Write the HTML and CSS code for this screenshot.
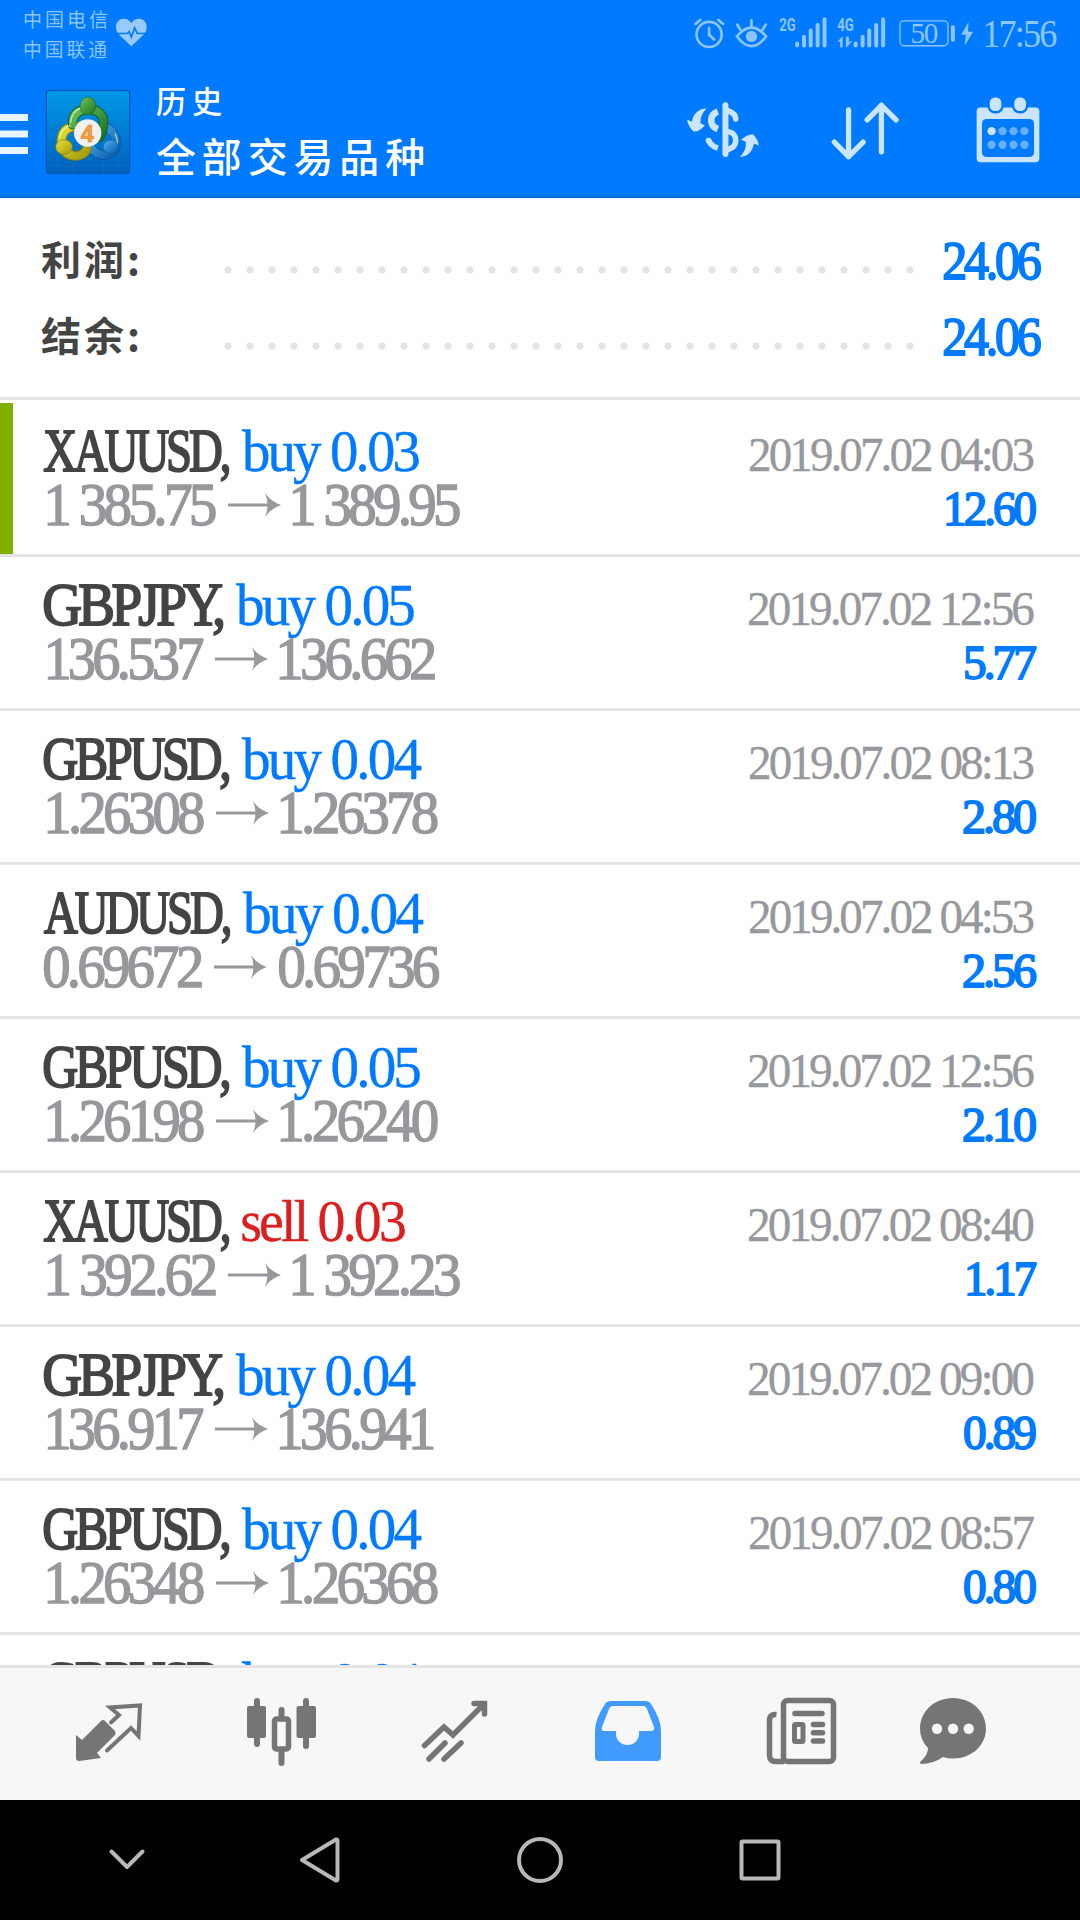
FILE: index.html
```html
<!DOCTYPE html>
<html lang="zh-CN">
<head>
<meta charset="utf-8">
<title>历史</title>
<link rel="stylesheet" href="styles.css">
</head>
<body>
<header class="header">
  <div class="status">
    <div class="carriers">
      <span class="carrier" data-w="83">中国电信</span>
      <span class="carrier" data-w="83">中国联通</span>
    </div>
    <svg class="heart" viewBox="340 50 105 100" width="35" height="33">
      <path d="M392 142 L352 104 C338 82 348 58 368 58 C380 58 388 64 392 72 C396 64 404 58 416 58 C436 58 446 82 432 104 Z" fill="#99caff"/>
      <path d="M345 103 H380 L385 97 L392 114 L402 86 L410 103 H440" fill="none" stroke="#007aff" stroke-width="5"/>
    </svg>
    <svg class="status-icons" viewBox="90 30 865 130" width="288" height="43">
      <g fill="none" stroke="#8cc5ff" stroke-width="8" stroke-linecap="round">
        <circle cx="145" cy="104" r="38"/>
        <path d="M145 85 V105 L160 119 M104 72 L118 60 M187 72 L173 60"/>
        <path d="M229 110 Q273 57 317 110 Q273 168 229 110 Z M273 61 V78 M230 74 L239 89 M316 74 L307 89"/>
      </g>
      <circle cx="273" cy="110" r="17" fill="#8cc5ff"/>
      <g stroke="#8cc5ff" stroke-width="12" stroke-linecap="round">
        <path d="M411 131 V137 M432 111 V137 M452 92 V137 M473 75 V137 M494 58 V137"/>
        <path d="M588 131 V137 M609 111 V137 M629 92 V137 M650 75 V137 M671 58 V137"/>
      </g>
      <path d="M543 142 V122 L535 126 L547 112 V142 Z M560 112 V142 L575 125 L566 129 V112 Z" fill="#8cc5ff" stroke="#8cc5ff" stroke-width="3"/>
      <g class="net" fill="#8cc5ff">
        <text x="357" y="93" textLength="50" lengthAdjust="spacingAndGlyphs">2G</text>
        <text x="532" y="93" textLength="50" lengthAdjust="spacingAndGlyphs">4G</text>
      </g>
      <rect x="722" y="63" width="145" height="75" rx="12" fill="none" stroke="#8cc5ff" stroke-width="4"/>
      <rect x="876" y="76" width="12" height="50" rx="5" fill="#8cc5ff"/>
      <text class="charge" x="754" y="130" textLength="80" lengthAdjust="spacingAndGlyphs" fill="#8cc5ff">50</text>
      <path d="M929 66 L907 105 H921 L918 137 L943 96 H928 Z" fill="#8cc5ff"/>
    </svg>
    <span class="clock" data-w="72">17:56</span>
  </div>
  <div class="toolbar">
    <svg class="menu" viewBox="0 0 28 41" width="28" height="41">
      <path d="M0 3.5H28M0 20H28M0 36.5H28" stroke="#e8f4ff" stroke-width="7"/>
    </svg>
    <svg class="logo" viewBox="0 0 288 288" width="96" height="96">
      <defs>
        <linearGradient id="bg" x1="0" y1="0" x2="0" y2="1"><stop offset="0" stop-color="#0098ea"/><stop offset="1" stop-color="#0060ba"/></linearGradient>
        <linearGradient id="gr" x1="0" y1="0" x2="1" y2="1"><stop offset="0" stop-color="#72c45c"/><stop offset="1" stop-color="#157224"/></linearGradient>
        <linearGradient id="ye" x1="0" y1="0" x2="1" y2="1"><stop offset="0" stop-color="#e8e03a"/><stop offset="1" stop-color="#a39b0c"/></linearGradient>
        <linearGradient id="bl" x1="0" y1="0" x2="1" y2="1"><stop offset="0" stop-color="#4db4ea"/><stop offset="1" stop-color="#0a5cae"/></linearGradient>
      </defs>
      <rect x="19" y="19" width="250" height="250" rx="10" fill="url(#bg)" stroke="#0058b8" stroke-width="4"/>
      <path d="M52 20V268M98 20V268M144 20V268M190 20V268M236 20V268M20 62H268M20 108H268M20 154H268M20 200H268M20 246H268" stroke="#2f9de8" stroke-opacity=".25" stroke-width="2"/>
      <g fill="none" stroke-linecap="round">
        <path d="M154 192 Q172 216 198 213 Q232 207 228 172 Q224 136 192 130" stroke="#0a5ca8" stroke-width="29"/>
        <path d="M154 192 Q172 216 198 213 Q232 207 228 172 Q224 136 192 130" stroke="url(#bl)" stroke-width="23"/>
        <path d="M110 126 Q66 130 64 170 Q66 214 108 216 Q132 214 140 196" stroke="#87820a" stroke-width="29"/>
        <path d="M110 126 Q66 130 64 170 Q66 214 108 216 Q132 214 140 196" stroke="url(#ye)" stroke-width="23"/>
        <path d="M98 122 Q96 80 144 74 Q196 80 190 126 Q188 144 178 160" stroke="#0e6420" stroke-width="29"/>
        <path d="M98 122 Q96 80 144 74 Q196 80 190 126 Q188 144 178 160" stroke="url(#gr)" stroke-width="23"/>
        <path d="M92 116 Q95 80 124 72 M59 160 Q65 132 90 125 M226 196 Q238 178 226 150" stroke="#e7f6c9" stroke-opacity=".75" stroke-width="4"/>
      </g>
      <ellipse cx="144" cy="66" rx="24" ry="27" fill="url(#gr)" stroke="#176b27" stroke-width="2"/>
      <ellipse cx="72" cy="189" rx="25" ry="22" fill="url(#ye)" stroke="#87820a" stroke-width="2"/>
      <ellipse cx="212" cy="188" rx="23" ry="20" fill="url(#bl)" stroke="#0a5ca8" stroke-width="2"/>
      <circle cx="143" cy="147" r="41" fill="#f0f0f2"/>
      <text class="four" x="122" y="173" fill="#f2a040" stroke="#e8862c" stroke-width="2" textLength="40" lengthAdjust="spacingAndGlyphs">4</text>
    </svg>
    <div class="titles">
      <h1 class="title" data-w="66">历史</h1>
      <div class="subtitle" data-w="267">全部交易品种</div>
    </div>
    <svg class="actions" viewBox="60 280 1100 220" width="367" height="73">
      <g fill="none" stroke="#cce5ff" stroke-linecap="round" stroke-linejoin="round">
        <path d="M194 317 V464" stroke-width="18"/>
        <path d="M203 334 Q224 342 225 358" stroke-width="17"/>
        <path d="M143 423 Q151 440 171 446" stroke-width="17" stroke-linecap="butt"/>
        <path d="M203 397 Q224 400 225 423 Q225 442 203 450" stroke-width="17"/>
        <path d="M171 336 Q151 343 151 362 Q151 381 171 389" stroke-width="20" stroke-linecap="butt"/>
        <path d="M565 331V472M522 428L565 472L609 428M664 457V317M621 361L664 317L708 361" stroke-width="16"/>
      </g>
      <circle cx="143" cy="423" r="8.500" fill="#cce5ff"/>
      <path d="M137 327 C108 327 95 350 93 367 L78 360 Q82 382 98 396 Q114 398 132 378 L119 371 C118 352 126 338 137 327 Z" fill="#cce5ff"/>
      <path d="M237 473 C268 470 276 450 280 432 L294 439 Q293 420 277 404 Q258 405 241 421 L255 427 C257 447 250 460 237 473 Z" fill="#cce5ff"/>
      <rect x="951" y="324" width="189" height="165" rx="12" fill="#cce5ff"/>
      <rect x="967" y="358" width="157" height="115" rx="14" fill="#007aff"/>
      <rect x="987" y="290" width="42" height="48" rx="19" fill="#cce5ff" stroke="#007aff" stroke-width="7"/>
      <rect x="1061" y="290" width="42" height="48" rx="19" fill="#cce5ff" stroke="#007aff" stroke-width="7"/>
      <g fill="#66afff"><circle cx="1029" cy="395" r="12.500"/><circle cx="1062" cy="395" r="12.500"/><circle cx="1095" cy="395" r="12.500"/><circle cx="996" cy="436" r="12.500"/><circle cx="1029" cy="436" r="12.500"/><circle cx="1062" cy="436" r="12.500"/><circle cx="1095" cy="436" r="12.500"/></g>
      <circle cx="996" cy="395" r="12.500" fill="#cce5ff"/>
    </svg>
  </div>
</header>

<section class="summary">
  <div class="total"><span class="label" data-w="97">利润:</span><i class="dots"></i><b class="sum" data-w="97">24.06</b></div>
  <div class="total"><span class="label" data-w="97">结余:</span><i class="dots"></i><b class="sum" data-w="97">24.06</b></div>
</section>

<main class="deals">
  <article class="deal marked">
    <div class="left">
      <div class="line"><span class="symbol" data-w="185">XAUUSD,</span><span class="side buy" data-w="177">buy 0.03</span></div>
      <div class="line price"><span data-w="168">1 385.75</span><svg class="arrow" viewBox="0 0 53 24"><path d="M0 12H42" stroke="#97989c" stroke-width="3"/><path d="M37 0Q42 8 53 12Q42 16 37 24Q42 12 37 0Z" fill="#97989c"/></svg><span data-w="167">1 389.95</span></div>
    </div>
    <div class="right"><time data-w="284">2019.07.02 04:03</time><b class="profit" data-w="89">12.60</b></div>
  </article>
  <article class="deal">
    <div class="left">
      <div class="line"><span class="symbol" data-w="179">GBPJPY,</span><span class="side buy" data-w="178">buy 0.05</span></div>
      <div class="line price"><span data-w="155">136.537</span><svg class="arrow" viewBox="0 0 53 24"><path d="M0 12H42" stroke="#97989c" stroke-width="3"/><path d="M37 0Q42 8 53 12Q42 16 37 24Q42 12 37 0Z" fill="#97989c"/></svg><span data-w="155">136.662</span></div>
    </div>
    <div class="right"><time data-w="285">2019.07.02 12:56</time><b class="profit" data-w="71">5.77</b></div>
  </article>
  <article class="deal">
    <div class="left">
      <div class="line"><span class="symbol" data-w="185">GBPUSD,</span><span class="side buy" data-w="180">buy 0.04</span></div>
      <div class="line price"><span data-w="156">1.26308</span><svg class="arrow" viewBox="0 0 53 24"><path d="M0 12H42" stroke="#97989c" stroke-width="3"/><path d="M37 0Q42 8 53 12Q42 16 37 24Q42 12 37 0Z" fill="#97989c"/></svg><span data-w="157">1.26378</span></div>
    </div>
    <div class="right"><time data-w="284">2019.07.02 08:13</time><b class="profit" data-w="72">2.80</b></div>
  </article>
  <article class="deal">
    <div class="left">
      <div class="line"><span class="symbol" data-w="186">AUDUSD,</span><span class="side buy" data-w="181">buy 0.04</span></div>
      <div class="line price zero"><span data-w="158">0.69672</span><svg class="arrow" viewBox="0 0 53 24"><path d="M0 12H42" stroke="#97989c" stroke-width="3"/><path d="M37 0Q42 8 53 12Q42 16 37 24Q42 12 37 0Z" fill="#97989c"/></svg><span data-w="160">0.69736</span></div>
    </div>
    <div class="right"><time data-w="284">2019.07.02 04:53</time><b class="profit" data-w="72">2.56</b></div>
  </article>
  <article class="deal">
    <div class="left">
      <div class="line"><span class="symbol" data-w="185">GBPUSD,</span><span class="side buy" data-w="178">buy 0.05</span></div>
      <div class="line price"><span data-w="156">1.26198</span><svg class="arrow" viewBox="0 0 53 24"><path d="M0 12H42" stroke="#97989c" stroke-width="3"/><path d="M37 0Q42 8 53 12Q42 16 37 24Q42 12 37 0Z" fill="#97989c"/></svg><span data-w="157">1.26240</span></div>
    </div>
    <div class="right"><time data-w="285">2019.07.02 12:56</time><b class="profit" data-w="72">2.10</b></div>
  </article>
  <article class="deal">
    <div class="left">
      <div class="line"><span class="symbol" data-w="185">XAUUSD,</span><span class="side sell" data-w="163">sell 0.03</span></div>
      <div class="line price"><span data-w="168">1 392.62</span><svg class="arrow" viewBox="0 0 53 24"><path d="M0 12H42" stroke="#97989c" stroke-width="3"/><path d="M37 0Q42 8 53 12Q42 16 37 24Q42 12 37 0Z" fill="#97989c"/></svg><span data-w="167">1 392.23</span></div>
    </div>
    <div class="right"><time data-w="285">2019.07.02 08:40</time><b class="profit" data-w="68">1.17</b></div>
  </article>
  <article class="deal">
    <div class="left">
      <div class="line"><span class="symbol" data-w="179">GBPJPY,</span><span class="side buy" data-w="180">buy 0.04</span></div>
      <div class="line price"><span data-w="155">136.917</span><svg class="arrow" viewBox="0 0 53 24"><path d="M0 12H42" stroke="#97989c" stroke-width="3"/><path d="M37 0Q42 8 53 12Q42 16 37 24Q42 12 37 0Z" fill="#97989c"/></svg><span data-w="153">136.941</span></div>
    </div>
    <div class="right"><time data-w="285">2019.07.02 09:00</time><b class="profit" data-w="72">0.89</b></div>
  </article>
  <article class="deal">
    <div class="left">
      <div class="line"><span class="symbol" data-w="185">GBPUSD,</span><span class="side buy" data-w="180">buy 0.04</span></div>
      <div class="line price"><span data-w="156">1.26348</span><svg class="arrow" viewBox="0 0 53 24"><path d="M0 12H42" stroke="#97989c" stroke-width="3"/><path d="M37 0Q42 8 53 12Q42 16 37 24Q42 12 37 0Z" fill="#97989c"/></svg><span data-w="157">1.26368</span></div>
    </div>
    <div class="right"><time data-w="284">2019.07.02 08:57</time><b class="profit" data-w="72">0.80</b></div>
  </article>
  <article class="deal">
    <div class="left">
      <div class="line"><span class="symbol" data-w="185">GBPUSD,</span><span class="side buy" data-w="180">buy 0.04</span></div>
    </div>
  </article>
</main>

<nav class="tabs">
  <svg viewBox="0 1668 195 132" width="195" height="132">
    <path d="M101 1721 Q103 1719 105 1721 L115 1731 Q116 1733 115 1735 L97 1753 L101 1758 L79 1761 Q76 1761 76 1758 V1735 L82 1740 Z" fill="#757575"/>
    <path d="M111 1722.500 L119 1715 L110 1707.500 L140 1705.500 L138.500 1736 L131 1728 L107 1750.500" fill="none" stroke="#757575" stroke-width="4" stroke-linecap="round"/>
  </svg>
  <svg viewBox="195 1668 173 132" width="173" height="132">
    <path d="M257 1701V1744M281.500 1710V1720M281.500 1750V1763M306 1701V1746" stroke="#757575" stroke-width="6" stroke-linecap="round"/>
    <rect x="247" y="1706" width="19" height="32" rx="2" fill="#757575"/><rect x="296.500" y="1706" width="19.500" height="32" rx="2" fill="#757575"/>
    <rect x="274.500" y="1719" width="14" height="30" rx="2" fill="#f7f7f7" stroke="#757575" stroke-width="5.500"/>
  </svg>
  <svg viewBox="368 1668 172 132" width="172" height="132">
    <path d="M424.500 1745.500L444 1727L453 1735L484 1704M474 1703.500H484.500V1714M429 1759L445 1743M444 1759L461 1743" fill="none" stroke="#757575" stroke-width="5.500" stroke-linecap="round"/>
  </svg>
  <svg viewBox="540 1668 174 132" width="174" height="132">
    <path fill="#419bff" fill-rule="evenodd" d="M611 1701H645Q649 1701 651 1704Q661 1719 661 1731V1757Q661 1761 657 1761H599Q595 1761 595 1757V1731Q595 1719 605 1704Q607 1701 611 1701ZM613 1706Q610 1706 609 1709L602 1727Q601 1731 604 1731H616V1734A11.500 11 0 0 0 639 1734V1731H651Q655 1731 654 1727L647 1709Q646 1706 643 1706Z"/>
  </svg>
  <svg viewBox="714 1668 164 132" width="164" height="132">
    <rect x="783.500" y="1700.500" width="50" height="61" rx="4" fill="none" stroke="#757575" stroke-width="5.500"/>
    <path d="M776.500 1714.500Q769.500 1713.500 769.500 1721V1755Q769.500 1761.500 776 1761.500H784" fill="none" stroke="#757575" stroke-width="5.500"/>
    <path d="M795 1713.500H822M813.500 1724.500H822.500M813.500 1732.700H822.500M813.500 1741H822.500" stroke="#757575" stroke-width="5.500" stroke-linecap="round"/>
    <rect x="794.500" y="1724.500" width="8.500" height="17" rx="1" fill="none" stroke="#757575" stroke-width="5"/>
  </svg>
  <svg viewBox="878 1668 202 132" width="202" height="132">
    <path d="M953 1698C972 1698 986 1712 986 1728.500S972 1758.500 953 1758.500Q948 1758.500 943 1757Q933 1764 921 1764Q919 1763 921 1761Q928 1755 928 1748Q920 1740 920 1728.500C920 1712 934 1698 953 1698Z" fill="#757575"/>
    <circle cx="937" cy="1728.700" r="5.200" fill="#f7f7f7"/><circle cx="953" cy="1728.700" r="5.200" fill="#f7f7f7"/><circle cx="968.700" cy="1728.700" r="5.200" fill="#f7f7f7"/>
  </svg>
</nav>

<footer class="system-nav">
  <svg viewBox="0 1800 1080 120" width="1080" height="120" fill="none" stroke="#b8b8b8" stroke-width="4" stroke-linejoin="round" stroke-linecap="round">
    <path d="M111.500 1851.500L127 1867L142.500 1851.500"/>
    <path d="M302 1860L336 1839.500Q337.500 1839 337.500 1841V1879Q337.500 1881 336 1880.500Z"/>
    <circle cx="540" cy="1860" r="21"/>
    <rect x="741.500" y="1841.500" width="37" height="37" rx="1"/>
  </svg>
</footer>
<script src="fit.js"></script>
</body>
</html>
```
FILE: styles.css
```css
* { box-sizing: border-box; }

body {
  margin: 0;
  width: 1080px;
  height: 1920px;
  overflow: hidden;
  display: flex;
  flex-direction: column;
  background: #fff;
  font-family: "Liberation Serif", "Noto Sans CJK SC", serif;
}

svg { display: block; flex: none; }

[data-w] { display: block; flex: none; white-space: nowrap; }
.ink { display: inline-block; white-space: nowrap; transform-origin: 0 0; }

.header {
  height: 198px;
  background: #007aff;
  border-bottom: 2px solid #0069dc;
}

.status { display: flex; height: 66px; color: #8cc5ff; }
.carriers { width: 114px; padding: 4px 0 0 24px; }
.carrier { height: 30px; font: 400 19px/30px "Noto Sans CJK SC", sans-serif; letter-spacing: 3px; }
.heart { margin-top: 16px; }
.status-icons { margin: 10px 7px 0 541px; }
.net { font: 700 54px Roboto, sans-serif; }
.charge { font: 87px "Liberation Serif", serif; letter-spacing: -4px; }
.clock { font-size: 39px; line-height: 44px; margin-top: 12px; letter-spacing: -2px; }

.toolbar { display: flex; height: 130px; color: #fff; }
.menu { margin-top: 48px; }
.logo { margin: 18px 0 0 12px; }
.titles { width: 268px; margin-left: 20px; }
.title {
  margin: 9px 0 0;
  height: 50px;
  font: 500 31px/50px "Noto Sans CJK SC", sans-serif;
  letter-spacing: 6px;
}
.subtitle {
  height: 60px;
  margin-top: 0;
  font: 500 40px/60px "Noto Sans CJK SC", sans-serif;
  letter-spacing: 6px;
}
.actions { margin: 27px 0 0 256px; }

.summary { height: 202px; padding-top: 25px; border-bottom: 3px solid #e4e4e4; }
.total { display: flex; align-items: center; height: 76px; padding-left: 41px; }
.label {
  font: 700 40px/76px "Noto Sans CJK SC", sans-serif;
  letter-spacing: 3px;
  margin-top: -6px;
  color: #444;
}
.dots {
  width: 704px;
  height: 8px;
  margin: 18px 23px 0 79px;
  background: radial-gradient(circle at 11px 4px, #e4e4e4 3.2px, transparent 4px) 0 0 / 22px 8px;
}
.sum {
  font-size: 54px;
  font-weight: 400;
  line-height: 76px;
  letter-spacing: -3.5px;
  color: #007aff;
  -webkit-text-stroke: 1.8px #007aff;
}

.deals { height: 1265px; padding-top: 3px; overflow: hidden; }
.deal {
  display: flex;
  justify-content: space-between;
  height: 154px;
  padding: 21px 44px 0 44px;
  border-bottom: 3px solid #e4e4e4;
}
.marked { box-shadow: inset 13px 0 #7fb000; }
.line { display: flex; gap: 13px; height: 54px; font-size: 61px; line-height: 54px; }
.symbol { color: #444; letter-spacing: -4px; -webkit-text-stroke: 2px #444; }
.side { font-size: 60px; letter-spacing: -3px; }
.buy { color: #007aff; -webkit-text-stroke: .4px #007aff; }
.sell { color: #dc1e1e; -webkit-text-stroke: .4px #dc1e1e; }
.price {
  gap: 12px;
  padding-left: 4px;
  letter-spacing: -4px;
  color: #97989c;
  -webkit-text-stroke: 1.4px #97989c;
}
.zero { padding-left: 0; }
.arrow { width: 53px; height: 24px; margin-top: 15px; }

.right {
  display: flex;
  flex-direction: column;
  align-items: flex-end;
  padding-top: 4px;
  font-size: 48px;
  line-height: 54px;
  letter-spacing: -3px;
}
.right time { height: 54px; color: #97989c; margin-right: 2px; -webkit-text-stroke: .3px #97989c; }
.profit { height: 54px; font-weight: 400; color: #007aff; -webkit-text-stroke: 1.8px #007aff; }

.tabs {
  display: flex;
  height: 135px;
  border-top: 3px solid #e4e4e4;
  background: #f7f7f7;
}
.system-nav { height: 120px; background: #000; }
.four { font: 700 68px "Open Sans", sans-serif; }
```
FILE: fit.js
```js
// Condenses each label so that its ink spans exactly data-w pixels.
const ctx = document.createElement('canvas').getContext('2d');
document.querySelectorAll('[data-w]').forEach((el) => {
  const width = Number(el.dataset.w);
  const style = getComputedStyle(el);
  ctx.font = `${style.fontWeight} ${style.fontSize} ${style.fontFamily}`;
  ctx.letterSpacing = style.letterSpacing === 'normal' ? '0px' : style.letterSpacing;
  const m = ctx.measureText(el.textContent);
  const left = -m.actualBoundingBoxLeft;
  const scale = width / (m.actualBoundingBoxRight - left);
  const ink = document.createElement('span');
  ink.className = 'ink';
  ink.textContent = el.textContent;
  ink.style.transform = `translateX(${-left * scale}px) scaleX(${scale})`;
  el.textContent = '';
  el.appendChild(ink);
  el.style.width = `${width}px`;
});
```
